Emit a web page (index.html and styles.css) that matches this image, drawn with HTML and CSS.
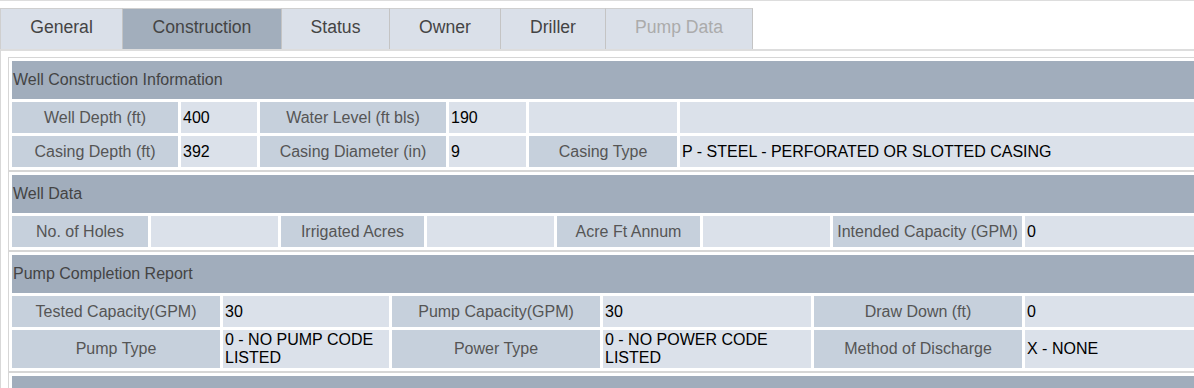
FILE: index.html
```html
<!DOCTYPE html>
<html lang="en">

<head>
    <meta charset="UTF-8">
    <meta name="viewport" content="width=device-width, initial-scale=1.0">
    <title>Well Details</title>
    <link rel="stylesheet" href="styles.css">
</head>

<body>
    <div class="page">
        <div class="top-rule"></div>

        <!-- tabs -->
        <div class="tabs">
            <span class="tab tab-general">General</span>
            <span class="tab tab-construction active">Construction</span>
            <span class="tab tab-status">Status</span>
            <span class="tab tab-owner">Owner</span>
            <span class="tab tab-driller">Driller</span>
            <span class="tab tab-pump disabled">Pump Data</span>
        </div>

        <div class="panel">
            <!-- construction info -->
            <div class="section sec-construction">
                <div class="sec-head">Well Construction Information</div>
                <div class="lbl">Well Depth (ft)</div>
                <div class="val">400</div>
                <div class="lbl">Water Level (ft bls)</div>
                <div class="val">190</div>
                <div class="val"></div>
                <div class="val"></div>

                <div class="lbl">Casing Depth (ft)</div>
                <div class="val">392</div>
                <div class="lbl">Casing Diameter (in)</div>
                <div class="val">9</div>
                <div class="lbl">Casing Type</div>
                <div class="val">P - STEEL - PERFORATED OR SLOTTED CASING</div>
            </div>

            <!-- well data -->
            <div class="section sec-well">
                <div class="sec-head">Well Data</div>
                <div class="lbl">No. of Holes</div>
                <div class="val"></div>
                <div class="lbl">Irrigated Acres</div>
                <div class="val"></div>
                <div class="lbl">Acre Ft Annum</div>
                <div class="val"></div>
                <div class="lbl">Intended Capacity (GPM)</div>
                <div class="val">0</div>
            </div>

            <!-- pump report -->
            <div class="section sec-pump">
                <div class="sec-head">Pump Completion Report</div>
                <div class="lbl">Tested Capacity(GPM)</div>
                <div class="val">30</div>
                <div class="lbl">Pump Capacity(GPM)</div>
                <div class="val">30</div>
                <div class="lbl">Draw Down (ft)</div>
                <div class="val">0</div>

                <div class="lbl">Pump Type</div>
                <div class="val">0 - NO PUMP CODE LISTED</div>
                <div class="lbl">Power Type</div>
                <div class="val">0 - NO POWER CODE LISTED</div>
                <div class="lbl">Method of Discharge</div>
                <div class="val">X - NONE</div>
            </div>

            <!-- place of use -->
            <div class="section sec-place">
                <div class="sec-head">Place of Use</div>
            </div>
        </div>
    </div>
</body>

</html>
```

FILE: styles.css
```css
/* base */
:root {
    --head-bg: #a1adbc;
    --label-bg: #c6d0dc;
    --value-bg: #dbe1ea;
    --line: #d6d6d6;
}

body {
    margin: 0;
    background: #fff;
    font-family: 'Liberation Sans', Arial, sans-serif;
    font-size: 16px;
    color: #000;
}

.page {
    overflow: hidden;
    height: 100vh;
}

.top-rule {
    border-top: 1px solid #dddddd;
    margin-bottom: 7px;
}

/* tabs */
.tabs {
    display: flex;
}

.tab {
    flex: none;
    background: #dae0e9;
    border-top: 1px solid #cfcfcf;
    border-right: 1px solid #c4c4c4;
    padding-bottom: 4px;
    height: 36px;
    line-height: 36px;
    text-align: center;
    font-size: 17.6px;
    color: #444;
}

.tab:first-child {
    border-left: 1px solid #cfcfcf;
}

.tab-general { width: 121px; }
.tab-construction { width: 158px; }
.tab-status { width: 107px; }
.tab-owner { width: 110px; }
.tab-driller { width: 104px; }
.tab-pump { width: 146px; }

.tab.active {
    background: #a2aebc;
}

.tab.disabled {
    color: #ababab;
}

/* content panel */
.panel {
    border-top: 2px solid #dddddd;
    border-left: 1px solid #d8d8d8;
    padding: 6px 0 0 7px;
    margin-right: -9px;
}

.section {
    display: grid;
    gap: 3px;
    padding: 3px;
    border: 1px solid var(--line);
    grid-auto-rows: minmax(31px, auto);
}

.sec-construction {
    grid-template-columns: 166px 76px 186px 77px 148px 1fr;
}

.sec-well {
    grid-template-columns: 136px 127px 143px 127px 143px 127px 189px 1fr;
}

.sec-pump {
    grid-template-columns: 208px 166px 208px 208px 208px 1fr;
}

.sec-head {
    grid-column: 1 / -1;
    background: var(--head-bg);
    color: #444;
    height: 38px;
    padding-left: 1px;
    display: flex;
    align-items: center;
}

.lbl {
    background: var(--label-bg);
    color: #555;
    display: flex;
    align-items: center;
    justify-content: center;
    text-align: center;
    padding: 1px 2px;
}

.val {
    background: var(--value-bg);
    display: flex;
    align-items: center;
    padding: 1px 2px;
    line-height: 18px;
}
```
